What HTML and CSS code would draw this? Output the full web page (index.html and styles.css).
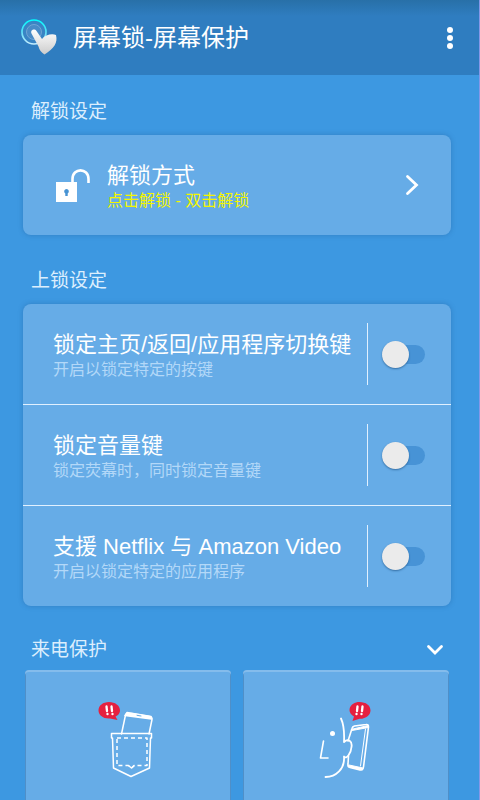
FILE: index.html
```html
<!DOCTYPE html>
<html lang="zh-CN">
<head>
<meta charset="utf-8">
<meta name="viewport" content="width=device-width, initial-scale=1">
<title>屏幕锁-屏幕保护</title>
<link rel="stylesheet" href="styles.css">
</head>
<body>
<header class="bar">
  <svg class="logo" width="38" height="38" viewBox="0 0 38 38" aria-hidden="true">
    <defs>
      <linearGradient id="ring" x1="0" y1="0" x2="0" y2="1"><stop offset="0" stop-color="#0ff"/><stop offset=".5" stop-color="#5fdcf5"/><stop offset="1" stop-color="#c5eeff"/></linearGradient>
      <linearGradient id="hand" x1="0" y1="0" x2="0" y2="1"><stop offset="0" stop-color="#fff"/><stop offset="1" stop-color="#ccc"/></linearGradient>
    </defs>
    <circle cx="14" cy="13" r="12" fill="#3984c4" stroke="url(#ring)" stroke-width="1.7"/>
    <circle cx="14" cy="13" r="7.5" fill="#498bc7" stroke="#71a5d5" stroke-width="1"/>
    <path d="M11.500 14.500C10 11 14.500 9 16.500 12L22 20C25 16 32 14 36 16C38 24 34 29.500 24.500 35.500C21 33 19.500 31 18.500 27.500Z" fill="url(#hand)"/>
  </svg>
  <h1 class="bar-title">屏幕锁-屏幕保护</h1>
  <button class="icon-button" type="button" aria-label="更多">
    <svg width="8" height="24" viewBox="0 0 8 24" fill="#fff"><circle cx="4" cy="4" r="3"/><circle cx="4" cy="12" r="3"/><circle cx="4" cy="20" r="3"/></svg>
  </button>
</header>
<main class="content">
  <h2 class="section-title">解锁设定</h2>
  <section class="card">
    <a class="row" href="#unlock">
      <span class="lock">
        <svg width="36" height="36" viewBox="0 0 36 36" aria-hidden="true">
          <path d="M17.500 15V11C17.500 -.5 33.500 -.5 33.500 11V15" fill="none" stroke="#fff" stroke-width="2.600"/>
          <path d="M1 14H22V34H1Z" fill="#fff"/>
          <path d="M11.500 21a2.500 2.500 0 0 1 1.200 4.600V28h-2.400v-2.400A2.500 2.500 0 0 1 11.500 21Z" fill="#4793d3"/>
        </svg>
      </span>
      <span class="text"><span class="name">解锁方式</span><span class="note note-active">点击解锁 - 双击解锁</span></span>
      <svg class="next" width="14" height="22" viewBox="0 0 14 22" aria-hidden="true"><path d="M2.500 2.500L11.500 11L2.500 19.500" fill="none" stroke="#fff" stroke-width="2.800" stroke-linecap="round"/></svg>
    </a>
  </section>

  <h2 class="section-title">上锁设定</h2>
  <section class="card">
    <div class="row row-setting">
      <label class="text" for="keys"><span class="name">锁定主页/返回/应用程序切换键</span><span class="note">开启以锁定特定的按键</span></label>
      <span class="control"><input class="switch" type="checkbox" role="switch" id="keys"></span>
    </div>
    <div class="row row-setting">
      <label class="text" for="volume"><span class="name">锁定音量键</span><span class="note">锁定荧幕时，同时锁定音量键</span></label>
      <span class="control"><input class="switch" type="checkbox" role="switch" id="volume"></span>
    </div>
    <div class="row row-setting">
      <label class="text" for="video"><span class="name">支援 Netflix 与 Amazon Video</span><span class="note">开启以锁定特定的应用程序</span></label>
      <span class="control"><input class="switch" type="checkbox" role="switch" id="video"></span>
    </div>
  </section>

  <div class="section-head">
    <h2 class="section-title">来电保护</h2>
    <button class="icon-button" type="button" aria-label="收起">
      <svg width="18" height="12" viewBox="0 0 18 12"><path d="M2.500 2.500L9 9L15.500 2.500" fill="none" stroke="#fff" stroke-width="2.800" stroke-linecap="round"/></svg>
    </button>
  </div>
  <div class="tiles">
    <button class="tile" type="button" aria-label="口袋模式">
      <svg width="66" height="80" viewBox="0 0 66 80" fill="none" stroke="#fff" stroke-width="1.500" stroke-linejoin="round" stroke-linecap="round">
        <path d="M26.500 36L30.500 17Q31 14.500 33.500 15L54.500 18.500Q57.500 19 57 21.500L54 36"/>
        <path d="M31 16.500L32 14.500L56 18.500L56.500 21L30 17.500Z" fill="#fff"/>
        <path d="M42 17.300L46 18" stroke="#66ace7" stroke-width="1"/>
        <path d="M16.500 35.500H56.500V40H55.500L54.500 70L36 78.500L18.500 70L17.500 40H16.500Z"/>
        <path d="M22 40H52V67.500H39L36.500 70L33.500 67.500H22Z" stroke-dasharray="4 3" stroke-linecap="butt"/>
        <path d="M34 68L36.500 70L39 68"/>
        <path d="M14 4C20 4 25 7.500 25 12.500C25 16 22 18 20.500 18.500L22.500 22L15 20.500C8 21 3.500 17 3.500 12.500C3.500 7.500 8 4 14 4Z" fill="#e5203f" stroke="none"/>
        <path d="M11.500 8.500L12 13M16.500 8.500L17 13M12.500 16V16.200M17.500 16V16.200" stroke-width="2.300"/>
      </svg>
    </button>
    <button class="tile" type="button" aria-label="通话模式">
      <svg width="70" height="80" viewBox="0 0 70 80" fill="none" stroke="#fff" stroke-width="1.600" stroke-linejoin="round" stroke-linecap="round">
        <path d="M30 20.500C33 27 33.500 34 33 44C37 40 41.500 43 40.500 49C40 55 35.500 62 33 58.500C34 71 25 79 14.500 79" stroke-width="1.800"/>
        <path d="M12.500 43L9.500 60H17"/>
        <circle cx="21.500" cy="35.500" r="2.500" fill="#fff" stroke="none"/>
        <path d="M37 43L41 30.500Q41.500 28.500 43.500 28L55 26.500Q57.500 26 57.500 29L52.500 69Q52 72.500 49 72L39 69.500Q36.500 69 37 66L37.500 58"/>
        <path d="M42 31L57 27.500L57.500 29.500L41 32.500ZM38 67L52 70L51.500 72L38 69Z" fill="#fff" stroke-width="1"/>
        <path d="M54.500 31L49.500 68" stroke-width="1"/>
        <path d="M48.500 4C55 4 59.500 7.500 59.500 12.500C59.500 17 55 21 48.500 20.800L41.500 23L43 18.500C35 14 38.500 4 48.500 4Z" fill="#e5203f" stroke="none"/>
        <path d="M46.500 8.500L46 13M51.500 8.500L51 13M45.500 16V16.200M50.500 16V16.200" stroke-width="2.300"/>
      </svg>
    </button>
  </div>
</main>
</body>
</html>
```
FILE: styles.css
```css
* {
  box-sizing: border-box;
}

body {
  margin: 0;
  min-height: 100vh;
  display: flex;
  flex-direction: column;
  background: #3d98e1;
  border-right: 1px solid #8598e8;
  color: #fff;
  font-family: "Liberation Sans", "Noto Sans CJK SC", sans-serif;
  font-weight: 400;
}

h1,
h2 {
  margin: 0;
  font-weight: 400;
}

button {
  border: 0;
  padding: 0;
  background: none;
  cursor: pointer;
}

.icon-button {
  display: flex;
}

.bar {
  height: 75px;
  padding: 0 25px 0 20px;
  display: flex;
  align-items: center;
  background: linear-gradient(#2870a8, #2f7dc0 16px);
}

.bar-title {
  flex: 1;
  margin-left: 15px;
  font-size: 24px;
  line-height: 32px;
}

.content {
  flex: 1;
  display: flex;
  flex-direction: column;
  padding: 0 28px 0 23px;
}

.section-title {
  padding: 24px 8px 10px;
  font-size: 19px;
  line-height: 26px;
  color: #dceefd;
}

.card + .section-title {
  padding-top: 33px;
}

.card {
  border-radius: 8px;
  background: #66ace7;
  box-shadow: 0 0 5px rgba(30, 90, 150, 0.4);
}

.row {
  display: flex;
  height: 100px;
  color: inherit;
  text-decoration: none;
}

.row-setting {
  padding-left: 30px;
}

.row + .row {
  height: 101px;
  border-top: 1px solid #e0f0ff;
}

.lock {
  width: 84px;
  padding: 33px 0 0 32px;
}

.text {
  flex: 1;
  display: flex;
  flex-direction: column;
  padding-top: 28px;
  white-space: nowrap;
}

.name {
  font-size: 22px;
  line-height: 25px;
}

.note {
  font-size: 16px;
  line-height: 25px;
  color: #b3d8f8;
}

.note-active {
  color: #f4f500;
}

.next {
  align-self: center;
  margin-right: 32px;
}

.control {
  width: 84px;
  height: 62px;
  align-self: center;
  display: flex;
  align-items: center;
  padding-left: 14px;
  border-left: 1px solid #e0f0ff;
}

.switch {
  appearance: none;
  width: 43px;
  height: 19px;
  margin: 0;
  display: flex;
  align-items: center;
  border-radius: 10px;
  background: #4793d6;
}

.switch::before {
  content: "";
  width: 27px;
  height: 27px;
  border-radius: 50%;
  background: #ebebeb;
  box-shadow: 0 1px 2px rgba(20, 70, 120, 0.6);
}

.switch:checked {
  justify-content: flex-end;
}

.section-head {
  display: flex;
  align-items: center;
  justify-content: space-between;
  padding: 31px 7px 7px 0;
}

.section-head .section-title {
  padding-top: 0;
  padding-bottom: 0;
}

.tiles {
  flex: 1;
  display: grid;
  grid-template-columns: 1fr 1fr;
  gap: 12px;
  padding: 0 2px;
}

.tile {
  display: flex;
  justify-content: center;
  align-items: flex-start;
  min-height: 130px;
  padding-top: 28px;
  border-radius: 4px 4px 0 0;
  background: #66ace7;
  box-shadow: inset 0 2px 0 #84bcec, inset 1px 0 0 #4f8fc8, inset -1px 0 0 #4f8fc8;
}
```
